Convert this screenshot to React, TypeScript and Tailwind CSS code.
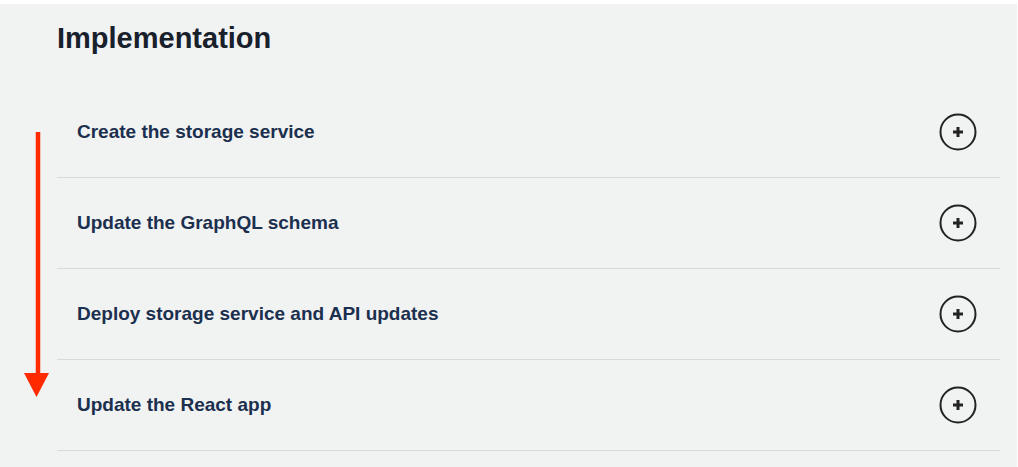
const steps = [
  "Create the storage service",
  "Update the GraphQL schema",
  "Deploy storage service and API updates",
  "Update the React app",
];

function PlusCircle() {
  return (
    <svg width="38" height="38" viewBox="0 0 38 38" fill="none">
      <circle cx="19" cy="19" r="17.5" stroke="#232323" strokeWidth="2" />
      <path d="M19 14v10M14 19h10" stroke="#232323" strokeWidth="3" />
    </svg>
  );
}

export default function App() {
  return (
    <div className="relative h-[467px] w-full bg-white pt-[4px] pr-px">
      <div
        className="h-full bg-[#f1f2f2] pl-[57px] pr-[17px]"
        style={{ fontFamily: '"Liberation Sans", Arial, sans-serif' }}
      >
        <h2 className="pt-[16px] text-[29px] font-bold leading-[36px] text-[#18202c]">Implementation</h2>

        <div className="mt-[31px]">
          {steps.map((s) => (
            <div
              key={s}
              className="flex h-[91px] items-center justify-between border-b border-[#d5dbdb] pl-[20px] pr-[23px]"
            >
              <span className="text-[19px] font-bold text-[#1b2f4e]">{s}</span>
              <PlusCircle />
            </div>
          ))}
        </div>
      </div>

      {/* red annotation arrow */}
      <svg className="absolute left-[22px] top-[132px]" width="28" height="266" viewBox="0 0 28 266" fill="none">
        <path d="M16 0v242" stroke="#ff2a00" strokeWidth="4.5" />
        <path d="M2 241h25l-12.5 24z" fill="#ff2a00" />
      </svg>
    </div>
  );
}
